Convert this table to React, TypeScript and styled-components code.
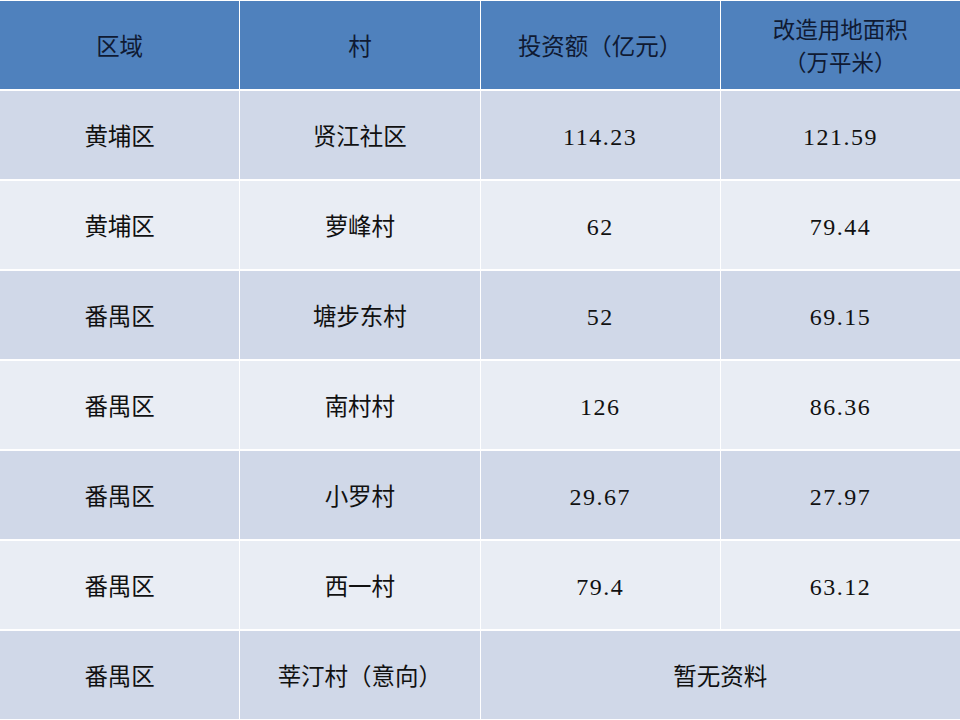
import React from 'react';
import styled, { createGlobalStyle } from 'styled-components';

const GlobalStyle = createGlobalStyle`
  html, body {
    margin: 0;
    padding: 0;
    background: #ffffff;
  }
`;

const Table = styled.div`
  display: grid;
  grid-template-columns: repeat(4, 1fr);
  grid-auto-rows: 88px;
  column-gap: 1px;
  row-gap: 2px;
  padding-top: 1px;
  width: 960px;
  height: 720px;
  box-sizing: border-box;
  background: #ffffff;
  overflow: hidden;
`;

const Cell = styled.div<{ $tone: 'head' | 'dark' | 'light'; $span?: number }>`
  display: flex;
  flex-direction: column;
  align-items: center;
  justify-content: center;
  text-align: center;
  grid-column: span ${(p) => p.$span ?? 1};
  background: ${(p) =>
    p.$tone === 'head' ? '#4f81bd' : p.$tone === 'dark' ? '#d0d8e8' : '#e9edf4'};
  color: ${(p) => (p.$tone === 'head' ? '#0f1a33' : '#111111')};
  font-family: 'Noto Sans CJK SC', sans-serif;
  font-size: 23.5px;
  line-height: 30px;
`;

const HeadLine = styled.span`
  display: block;
  font-size: 22.5px;
  line-height: 33px;
`;

const Num = styled.span`
  font-family: 'Liberation Serif', 'Noto Sans CJK SC', serif;
  font-size: 24px;
  letter-spacing: 1.5px;
  position: relative;
  top: 2px;
`;

const rows: [string, string, string, string][] = [
  ['黄埔区', '贤江社区', '114.23', '121.59'],
  ['黄埔区', '萝峰村', '62', '79.44'],
  ['番禺区', '塘步东村', '52', '69.15'],
  ['番禺区', '南村村', '126', '86.36'],
  ['番禺区', '小罗村', '29.67', '27.97'],
  ['番禺区', '西一村', '79.4', '63.12'],
];

export default function App() {
  return (
    <>
      <GlobalStyle />
      <Table>
        <Cell $tone="head">区域</Cell>
        <Cell $tone="head">村</Cell>
        <Cell $tone="head">投资额（亿元）</Cell>
        <Cell $tone="head">
          <HeadLine>改造用地面积</HeadLine>
          <HeadLine>（万平米）</HeadLine>
        </Cell>
        {rows.map((r, i) => {
          const tone = i % 2 === 0 ? 'dark' : 'light';
          return (
            <React.Fragment key={i}>
              <Cell $tone={tone}>{r[0]}</Cell>
              <Cell $tone={tone}>{r[1]}</Cell>
              <Cell $tone={tone}>
                <Num>{r[2]}</Num>
              </Cell>
              <Cell $tone={tone}>
                <Num>{r[3]}</Num>
              </Cell>
            </React.Fragment>
          );
        })}
        <Cell $tone="dark">番禺区</Cell>
        <Cell $tone="dark">莘汀村（意向）</Cell>
        <Cell $tone="dark" $span={2}>
          暂无资料
        </Cell>
      </Table>
    </>
  );
}
